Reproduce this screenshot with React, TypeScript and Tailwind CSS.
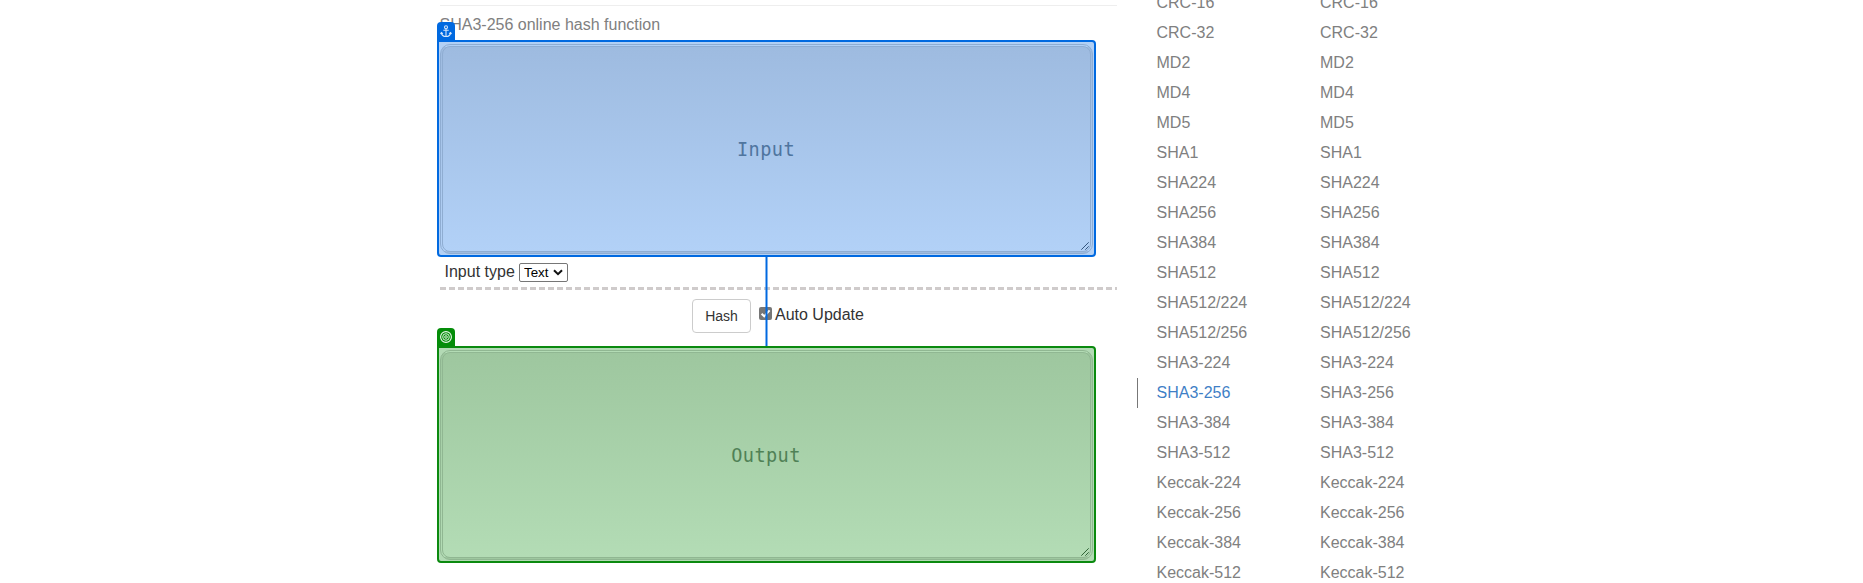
import type { ReactNode } from "react";

const algorithms = [
  "CRC-16", "CRC-32", "MD2", "MD4", "MD5", "SHA1", "SHA224", "SHA256", "SHA384", "SHA512",
  "SHA512/224", "SHA512/256", "SHA3-224", "SHA3-256", "SHA3-384", "SHA3-512",
  "Keccak-224", "Keccak-256", "Keccak-384", "Keccak-512",
];

function AlgorithmList({ active }: { active?: string }) {
  return (
    <ul className="-mt-3 w-[163.5px] shrink-0 text-base leading-[30px] text-[#808080]">
      {algorithms.map((name) => (
        <li
          key={name}
          className={
            name === active
              ? "h-[30px] border-l border-[#777777] pl-[18.5px] text-[#3f7fc6]"
              : "h-[30px] border-l border-transparent pl-[18.5px]"
          }
        >
          <a>{name}</a>
        </li>
      ))}
    </ul>
  );
}

function ResizeGrip({ className }: { className: string }) {
  return (
    <svg width="8" height="8" viewBox="0 0 8 8" className={className}>
      <path d="M0.3 7.7L7.7 0.3M4.3 7.7L7.7 4.3" stroke="currentColor" fill="none" />
    </svg>
  );
}

function AnchorIcon() {
  return (
    <svg width="12" height="13" viewBox="0 0 12 13" fill="none" stroke="#d8e8fb" strokeWidth="1.1">
      <circle cx="6" cy="2.2" r="1.5" />
      <path d="M6 3.7V11.6M3.3 5.3H8.7M1.4 7.6C1.6 9.9 3.4 11.5 6 11.5S10.4 9.9 10.6 7.6M0.5 9L1.4 7.5L2.9 8.6M11.5 9L10.6 7.5L9.1 8.6" />
    </svg>
  );
}

function TargetIcon() {
  return (
    <svg width="12" height="12" viewBox="0 0 12 12" fill="none" stroke="#eef8ee">
      <circle cx="6" cy="6" r="5.4" strokeWidth="1.1" />
      <circle cx="6" cy="6" r="3.3" strokeWidth="0.9" />
      <circle cx="6" cy="6" r="1.3" strokeWidth="0.9" />
    </svg>
  );
}

type PanelProps = { label: string; icon: ReactNode; tone: "blue" | "green" };

const tones = {
  blue: {
    frame: "border-[#0069e0] bg-[#b2d0f5]",
    badge: "bg-[#0069e0]",
    area: "border-[#8fadd2] from-[#9ebbe0] to-[#b2d1f7] text-[#4f759f]",
    grip: "text-[#34557f]",
  },
  green: {
    frame: "border-[#0b8a0f] bg-[#b3dab5]",
    badge: "bg-[#048d09]",
    area: "border-[#90b792] from-[#9ec79f] to-[#b3dcb5] text-[#508156]",
    grip: "text-[#2f6236]",
  },
};

function Panel({ label, icon, tone }: PanelProps) {
  const t = tones[tone];
  return (
    <section
      className={`relative -ml-[3px] h-[217px] w-[659px] shrink-0 rounded-[4px] rounded-tl-none border-2 pt-[2px] pr-px pb-px pl-px ${t.frame}`}
    >
      <div
        className={`absolute -top-5 -left-[2px] flex size-[18px] items-center justify-center rounded-t-[4px] ${t.badge}`}
      >
        {icon}
      </div>
      <div
        className={`relative flex h-[210px] w-[653px] items-center justify-center rounded-[10px] border-[3px] border-double bg-linear-to-b pt-[2px] pr-px font-['DejaVu_Sans_Mono',monospace] text-[18.6px] tracking-[0.4px] ${t.area}`}
      >
        {label}
        <ResizeGrip className={`absolute right-px bottom-px ${t.grip}`} />
      </div>
    </section>
  );
}

export default function App() {
  return (
    <div className="flex h-[583px] w-full overflow-hidden bg-white pl-[440px] font-['Liberation_Sans',Arial,sans-serif] text-base text-[#333333]">
      <main className="flex w-[677px] shrink-0 flex-col">
        <div className="mt-[5px] h-px shrink-0 bg-[#eeeeee]" />
        <p className="-ml-[0.5px] h-[34px] shrink-0 pt-[7px] leading-6 text-[#808080]">SHA3-256 online hash function</p>
        <Panel label="Input" icon={<AnchorIcon />} tone="blue" />
        <div className="flex h-[30px] shrink-0 items-start pt-[6px] pl-[4.5px]">
          <label className="-mt-px w-[74.5px] text-base leading-[19px]">Input type</label>
          <div className="relative h-[19px] w-[49px]">
            <select className="block h-[19px] w-[49px] appearance-none rounded-[2px] border border-[#767676] bg-white pl-1 text-[13.333px] leading-[17px] text-black">
              <option>Text</option>
            </select>
            <svg width="10" height="7" viewBox="0 0 10 7" className="absolute top-[6px] right-[5px]">
              <path d="M1 1.2L5 5.2L9 1.2" fill="none" stroke="#111" strokeWidth="2" />
            </svg>
          </div>
        </div>
        <div className="h-[3px] shrink-0 bg-[repeating-linear-gradient(90deg,#cfcbcb_0px,#cfcbcb_6px,#ffffff_6px,#ffffff_9px)]" />
        <div className="relative flex h-14 shrink-0 items-start pt-[9px] pl-[252px]">
          <button className="h-[34px] w-[59px] rounded-[4px] border border-[#cccccc] bg-white text-sm">Hash</button>
          <label className="ml-2 flex h-[34px] items-center">
            <svg width="13" height="13" viewBox="0 0 13 13" className="-mt-[5px] mr-[3px]">
              <rect width="13" height="13" rx="2" fill="#767676" />
              <path d="M2.6 6.7L5.2 9.3L10.6 3.3" fill="none" stroke="#fff" strokeWidth="2" />
            </svg>
            <span className="-mt-[3px] leading-6">Auto Update</span>
          </label>
          <svg width="3" height="89" viewBox="0 0 3 89" className="absolute bottom-0 left-[325px]">
            <path d="M1.5 0V89" stroke="#0069e0" strokeWidth="2" />
          </svg>
        </div>
        <Panel label="Output" icon={<TargetIcon />} tone="green" />
      </main>
      <aside className="ml-5 flex shrink-0">
        <AlgorithmList active="SHA3-256" />
        <AlgorithmList />
      </aside>
    </div>
  );
}
